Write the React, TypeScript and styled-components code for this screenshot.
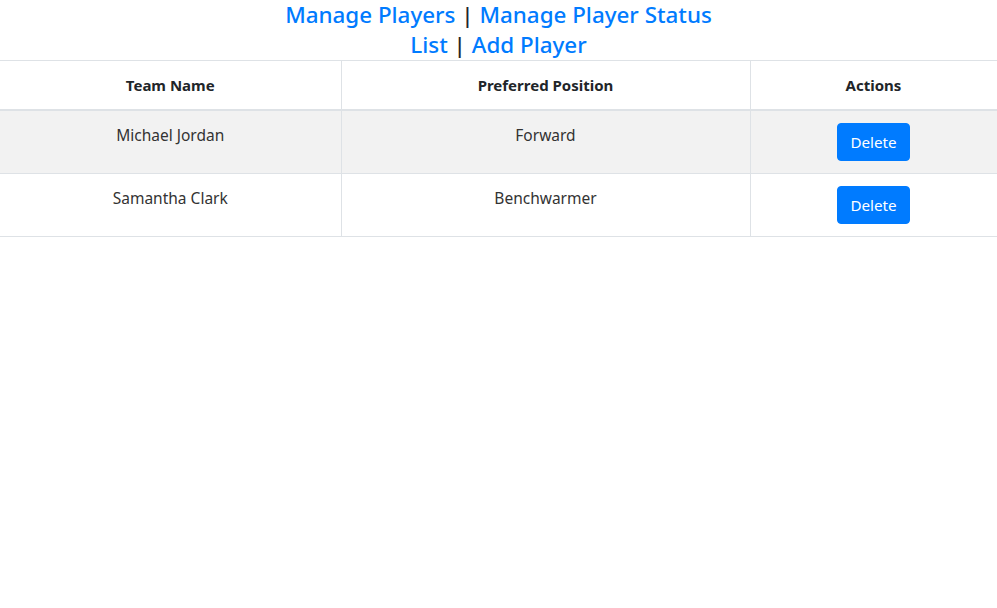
import React from "react";
import styled, { createGlobalStyle } from "styled-components";

const Global = createGlobalStyle`
  html, body { margin: 0; padding: 0; background: #fff; }
  body {
    font-family: "Noto Sans", "Open Sans", "Liberation Sans", sans-serif;
    font-size: 16px;
    line-height: 1.5;
    color: #212529;
  }
`;

const Title = styled.h2`
  margin: 0;
  text-align: center;
  font-size: 22.4px;
  font-weight: 500;
  line-height: 30px;
  color: #212529;
`;

const NavLink = styled.a`
  color: #007bff;
  text-decoration: none;
`;

const Table = styled.table`
  width: 997px;
  table-layout: fixed;
  border-collapse: collapse;
  border-top: 1px solid #dee2e6;
  border-bottom: 1px solid #dee2e6;
`;

const HeadCell = styled.th`
  padding: 12px;
  height: 24px;
  font-size: 15px;
  font-weight: 700;
  text-align: center;
  vertical-align: middle;
  border-bottom: 2px solid #dee2e6;
  border-right: 1px solid #dee2e6;
  line-height: 24px;
`;

const Row = styled.tr<{ $striped?: boolean }>`
  background: ${(p) => (p.$striped ? "#f2f2f2" : "#fff")};
  border-bottom: 1px solid #dee2e6;
`;

const Cell = styled.td`
  padding: 12px;
  text-align: center;
  vertical-align: top;
  border-right: 1px solid #dee2e6;
  font-size: 15.5px;
  line-height: 24px;
  color: #333;
`;

const DeleteButton = styled.button`
  font-family: inherit;
  font-size: 15.2px;
  line-height: 24px;
  height: 38px;
  padding: 6px 12px;
  border: 1px solid #007bff;
  border-radius: 4px;
  background: #007bff;
  color: #fff;
  cursor: pointer;
`;

const players = [
  { name: "Michael Jordan", position: "Forward" },
  { name: "Samantha Clark", position: "Benchwarmer" },
];

export default function App() {
  return (
    <>
      <Global />
      <Title>
        <NavLink href="#">Manage Players</NavLink> | <NavLink href="#">Manage Player Status</NavLink>
        <br />
        <NavLink href="#">List</NavLink> | <NavLink href="#">Add Player</NavLink>
      </Title>
      <Table>
        <colgroup>
          <col style={{ width: 341 }} />
          <col style={{ width: 409 }} />
          <col style={{ width: 247 }} />
        </colgroup>
        <thead>
          <tr>
            <HeadCell>Team Name</HeadCell>
            <HeadCell>Preferred Position</HeadCell>
            <HeadCell>Actions</HeadCell>
          </tr>
        </thead>
        <tbody>
          {players.map((p, i) => (
            <Row key={p.name} $striped={i % 2 === 0}>
              <Cell>{p.name}</Cell>
              <Cell>{p.position}</Cell>
              <Cell>
                <DeleteButton>Delete</DeleteButton>
              </Cell>
            </Row>
          ))}
        </tbody>
      </Table>
    </>
  );
}
